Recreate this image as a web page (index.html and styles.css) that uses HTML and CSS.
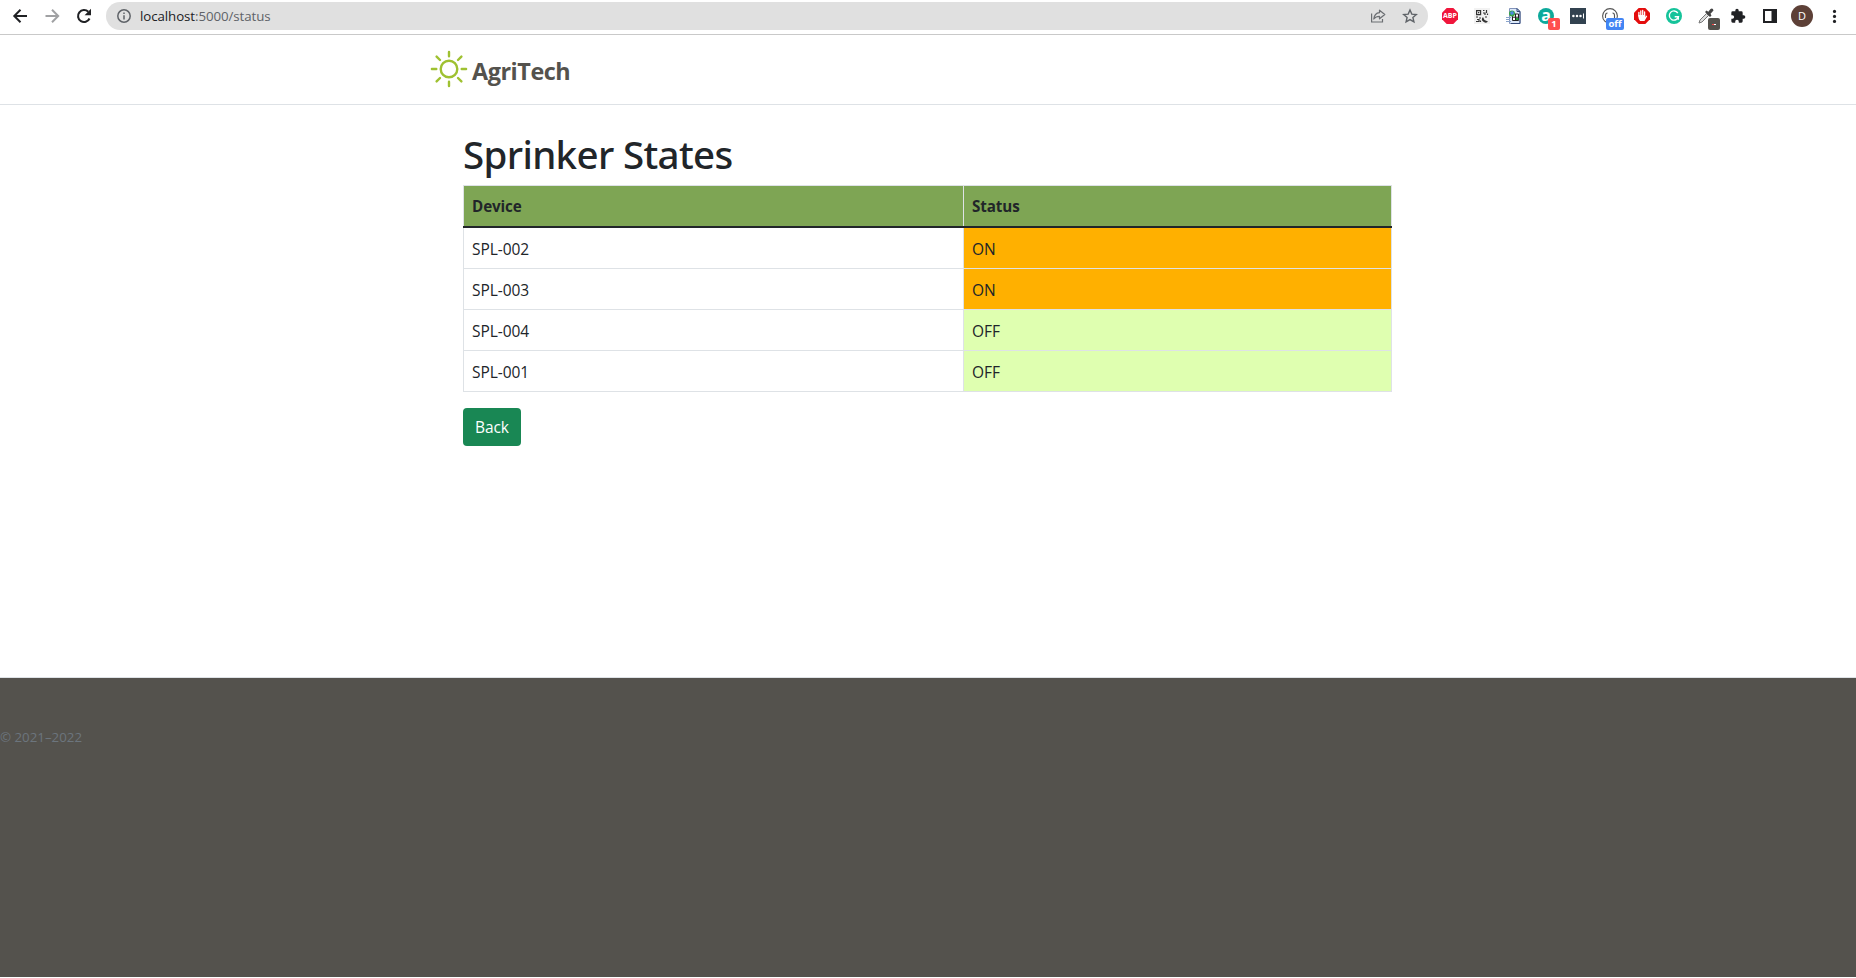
FILE: index.html
```html
<!DOCTYPE html>
<html lang="en">
<head>
<meta charset="utf-8">
<title>AgriTech</title>
<link rel="stylesheet" href="styles.css">
</head>
<body>
<div class="toolbar">
  <div class="nav">
    <svg width="16" height="16" viewBox="0 0 16 16" fill="none" stroke="#202124" stroke-width="2"><path d="M15 8H2.500M8.500 1.800L2.300 8 8.500 14.200"/></svg>
    <svg width="16" height="16" viewBox="0 0 16 16" fill="none" stroke="#a0a1a3" stroke-width="2"><path d="M1.500 8H14M8 1.800L14.200 8 8 14.200"/></svg>
    <svg width="16" height="16" viewBox="0 0 16 16"><path d="M13.500 10.500A6 6 0 1 1 12.300 3.800" fill="none" stroke="#202124" stroke-width="2.100"/><path d="M15 .8V7.200H8.600z" fill="#202124"/></svg>
  </div>
  <div class="address">
    <svg width="16" height="16" viewBox="0 0 16 16" fill="none" stroke="#5f6368" stroke-width="1.500"><circle cx="8" cy="8" r="6.200"/><path d="M8 7.200V11.600M8 4.400V6"/></svg>
    <span class="url"><b>localhost</b>:5000/status</span>
    <svg class="share" width="16" height="16" viewBox="0 0 16 16" fill="none" stroke="#6b6e72" stroke-width="1.200"><path d="M1.600 5.500V14H12.500V11"/><path d="M9.500 2.200L14.800 6.500 9.500 10.800V8.300C7 8.300 5.200 9 3.800 11 4.200 7.500 6 5 9.500 4.700z" stroke-linejoin="round"/></svg>
    <svg class="star" width="16" height="16" viewBox="0 0 16 16" fill="none" stroke="#5f6368" stroke-width="1.400"><path d="M8 2L9.800 6.100 14.300 6.500 10.900 9.500 11.900 13.900 8 11.600 4.100 13.900 5.100 9.500 1.700 6.500 6.200 6.100z"/></svg>
  </div>
  <div class="extensions">
    <span class="ext"><svg width="16" height="16" viewBox="0 0 16 16"><path d="M4.700 0h6.600L16 4.700v6.600L11.300 16H4.700L0 11.300V4.700z" fill="#f0163c"/></svg><i class="abp">ABP</i></span>
    <span class="ext"><svg width="16" height="16" viewBox="0 0 16 16"><rect width="16" height="16" fill="#f2f2f2"/><g fill="none" stroke="#333" stroke-width="1.200"><path d="M2.600 2.600h4v4h-4zM9 2.500h1.500M12.500 2v3M9 5h2v2M13.500 5.500v1.500M2 9h2M5 10h2M3 11.500h2v2H2M6.500 12.500V14M11 9h2"/></g><path d="M4 4h1.300v1.300H4zM9 9a3 2.800 0 1 0 5 4.500L10.500 12z" fill="#333"/></svg></span>
    <span class="ext"><svg width="16" height="16" viewBox="0 0 16 16"><path d="M3.500.5H11L14 3.500V15.500H3.500z" fill="#dce9fa" stroke="#8293ba"/><path d="M11 .5L14 3.500H11zM14 4V15.500H5" fill="none" stroke="#334878"/><path d="M6.500 6h6v6.500h-6zM9.500 6v6.500M6.500 9.200h6" fill="#fff" stroke="#222"/><circle cx="6" cy="5.500" r="3" fill="#35a447"/><path d="M4 4l3-1 1 3-3 1z" fill="#4a8bdd"/><path d="M0 9.500h5M0 11.500h4M0 13.500h5" stroke="#8aa4cc"/><path d="M10 10h2.500v2H10z" fill="#24a236"/></svg></span>
    <span class="ext"><svg width="16" height="16" viewBox="0 0 16 16"><circle cx="8" cy="8" r="8" fill="#0da99b"/></svg><i class="letter-a">a</i><i class="badge badge-red">1</i></span>
    <span class="ext"><svg width="16" height="16" viewBox="0 0 16 16"><rect width="16" height="16" fill="#324250"/><g fill="#fff"><circle cx="3.400" cy="8" r="1.250"/><circle cx="7" cy="8" r="1.250"/><circle cx="10.500" cy="8" r="1.250"/><path d="M13 5.500h1v5h-1z"/></g></svg></span>
    <span class="ext"><svg width="16" height="16" viewBox="0 0 16 16" fill="none" stroke="#555" stroke-width="1.100"><circle cx="8" cy="8" r="7.400"/><path d="M3.500 10V7.500Q3.500 5 5.500 5M10.500 5q2 0 2 2.500V10"/></svg><i class="badge badge-blue">off</i></span>
    <span class="ext"><svg width="16" height="16" viewBox="0 0 16 16"><path d="M4.700 0h6.600L16 4.700v6.600L11.300 16H4.700L0 11.300V4.700z" fill="#e40d0d"/><path d="M4.900 8V4.300M6.800 8V2.800M8.700 8V2.500M10.600 8V3.800" stroke="#fff" stroke-width="1.300" stroke-linecap="round"/><path d="M4.300 7h6.900V9l1.200-1.400.8.700L10.500 13H6.200Q4.300 11.500 4.300 7z" fill="#fff"/></svg></span>
    <span class="ext"><svg width="16" height="16" viewBox="0 0 16 16"><circle cx="8" cy="8" r="8" fill="#15c39a"/><path d="M11.800 5A4.600 4.600 0 1 0 12.400 8.700H8.700M12.300 8.500V11.800" fill="none" stroke="#fff" stroke-width="1.400"/></svg></span>
    <span class="ext"><svg width="16" height="16" viewBox="0 0 16 16"><path d="M1 15L2 12 8.500 5.500 10.500 7.500 4 14z" fill="#ddd" stroke="#777"/><path d="M7 4L8.500 2.600 10.300 3.800 12.500 1Q15-.3 15.500 2.500L12.500 5.700 13.500 7.500 12 9z" fill="#444"/></svg><i class="badge badge-grey"><svg width="4" height="1" viewBox="0 0 4 1"><path d="M0 0h2v1H0z" fill="#f44"/><path d="M2 0h2v1H2z" fill="#fff"/></svg></i></span>
    <span class="ext"><svg width="16" height="16" viewBox="0 0 24 24"><path d="M20.500 11H19V7a2 2 0 0 0-2-2h-4V3.500a2.500 2.500 0 0 0-5 0V5H4a2 2 0 0 0-2 2v3.800h1.500a2.700 2.700 0 0 1 0 5.400H2V20a2 2 0 0 0 2 2h3.800v-1.500a2.700 2.700 0 0 1 5.400 0V22H17a2 2 0 0 0 2-2v-4h1.500a2.500 2.500 0 0 0 0-5z" fill="#202124"/></svg></span>
    <span class="ext"><svg width="16" height="16" viewBox="0 0 16 16"><path d="M1 1h14v14H1zM3 3v10h6.500V3z" fill="#202124" fill-rule="evenodd"/></svg></span>
    <span class="ext"><i class="avatar">D</i></span>
    <span class="ext"><svg width="16" height="16" viewBox="0 0 16 16" fill="#202124"><circle cx="8.500" cy="3.400" r="1.600"/><circle cx="8.500" cy="8.400" r="1.600"/><circle cx="8.500" cy="13.400" r="1.600"/></svg></span>
  </div>
</div>
<header class="site-header">
  <a class="brand">
    <svg width="38" height="38" viewBox="0 0 38 38" fill="none" stroke="#9fc131" stroke-width="2.400" stroke-linecap="round"><circle cx="19" cy="19" r="8.300"/><path d="M19 1.900V6.300M19 31.700V36.100M1.900 19H6.300M31.700 19H36.100M6.600 6.600L10 10M28 28L31.400 31.400M31.400 6.600L28 10M10 28L6.600 31.400"/></svg>
    <span>AgriTech</span>
  </a>
</header>
<main class="content">
  <h1>Sprinker States</h1>
  <table class="states">
    <thead><tr><th class="device">Device</th><th>Status</th></tr></thead>
    <tbody>
      <tr><td>SPL-002</td><td class="on">ON</td></tr>
      <tr><td>SPL-003</td><td class="on">ON</td></tr>
      <tr><td>SPL-004</td><td class="off">OFF</td></tr>
      <tr><td>SPL-001</td><td class="off">OFF</td></tr>
    </tbody>
  </table>
  <a class="button">Back</a>
</main>
<footer class="site-footer"><small>© 2021–2022</small></footer>
</body>
</html>
```
FILE: styles.css
```css
* { box-sizing: border-box; }
html { height: 978px; overflow: hidden; background: #fff; }
body {
  margin: 0;
  height: 978px;
  display: flex;
  flex-direction: column;
  background: #fff;
  color: #212529;
  font: 15.500px/24px "Open Sans", "Noto Sans", sans-serif;
}
svg { display: block; }
i { font-style: normal; }

.toolbar {
  height: 35px;
  flex: none;
  display: flex;
  align-items: flex-start;
  border-bottom: 1px solid #c9c9c9;
}
.nav { display: flex; gap: 16px; padding: 8px 14px 0 12px; }
.address {
  width: 1322px;
  height: 28px;
  margin-top: 2px;
  padding: 0 10px;
  display: flex;
  align-items: center;
  border-radius: 14px;
  background: #e0e0e0;
}
.url {
  flex: 1;
  padding-left: 8px;
  color: #5f6368;
  font-size: 13.300px;
  letter-spacing: -0.080px;
  line-height: 28px;
}
.url b { font-weight: 400; color: #202124; }
.share { margin-right: 16px; }
.extensions { display: flex; gap: 16px; padding: 8px 0 0 14px; }
.ext { position: relative; width: 16px; height: 16px; flex: none; }
.abp, .letter-a {
  position: absolute;
  inset: 0;
  display: flex;
  align-items: center;
  justify-content: center;
  color: #fff;
  font-weight: 700;
  font-size: 7px;
  line-height: 16px;
}
.letter-a { font-size: 16px; line-height: 12px; padding-bottom: 2px; }
.badge {
  position: absolute;
  left: 10px;
  top: 10px;
  width: 12px;
  height: 12px;
  display: flex;
  align-items: center;
  justify-content: center;
  border-radius: 2px;
  color: #fff;
  font-size: 9.500px;
  font-weight: 700;
  line-height: 12px;
}
.badge-red { background: #ff4f4f; }
.badge-blue { left: 4px; width: 18px; background: #4285f4; }
.badge-grey { background: #54524d; left: 10px; }
.avatar {
  position: absolute;
  left: -3px;
  top: -3px;
  width: 22px;
  height: 22px;
  border-radius: 50%;
  background: #5d4037;
  color: #fff;
  font-size: 11px;
  line-height: 22px;
  text-align: center;
}

.site-header {
  height: 70px;
  flex: none;
  padding: 15px 0 0 430px;
  border-bottom: 1px solid #dee2e6;
}
.brand {
  display: flex;
  gap: 4px;
  color: #54524d;
  font-size: 23.400px;
  font-weight: 700;
  letter-spacing: -0.450px;
  line-height: 42px;
}

.content { width: 929px; height: 572px; flex: none; margin-left: 463px; padding-top: 25px; }
h1 {
  margin: 0 0 7px;
  font-family: "Noto Sans", sans-serif;
  font-size: 38.500px;
  font-weight: 500;
  letter-spacing: -0.650px;
  line-height: 48px;
}
.states { width: 929px; border-collapse: collapse; table-layout: fixed; }
.states th, .states td {
  height: 41px;
  padding: 9px 8px 7px;
  border: 1px solid #dee2e6;
  text-align: left;
  line-height: 24px;
}
.states td { letter-spacing: -0.050px; }
.states th {
  height: 41px;
  padding: 8px 8px 7px;
  background: #7ea554;
  font-size: 15.200px;
  font-weight: 700;
  letter-spacing: -0.100px;
  border-bottom: 2px solid #212529;
}
.states .device { width: 500px; }
.states .on { background: #ffb000; }
.states .off { background: #dfffb0; }
.button {
  display: block;
  width: 58px;
  height: 38px;
  margin-top: 16px;
  border-radius: 4px;
  background: #198754;
  color: #fff;
  letter-spacing: -0.100px;
  line-height: 38px;
  text-align: center;
}
.site-footer {
  height: 300px;
  flex: none;
  padding-top: 47px;
  border-top: 1px solid #dee2e6;
  background: #54524d;
  color: #6c757d;
}
small { display: block; font-size: 13.300px; line-height: 24px; }
```
